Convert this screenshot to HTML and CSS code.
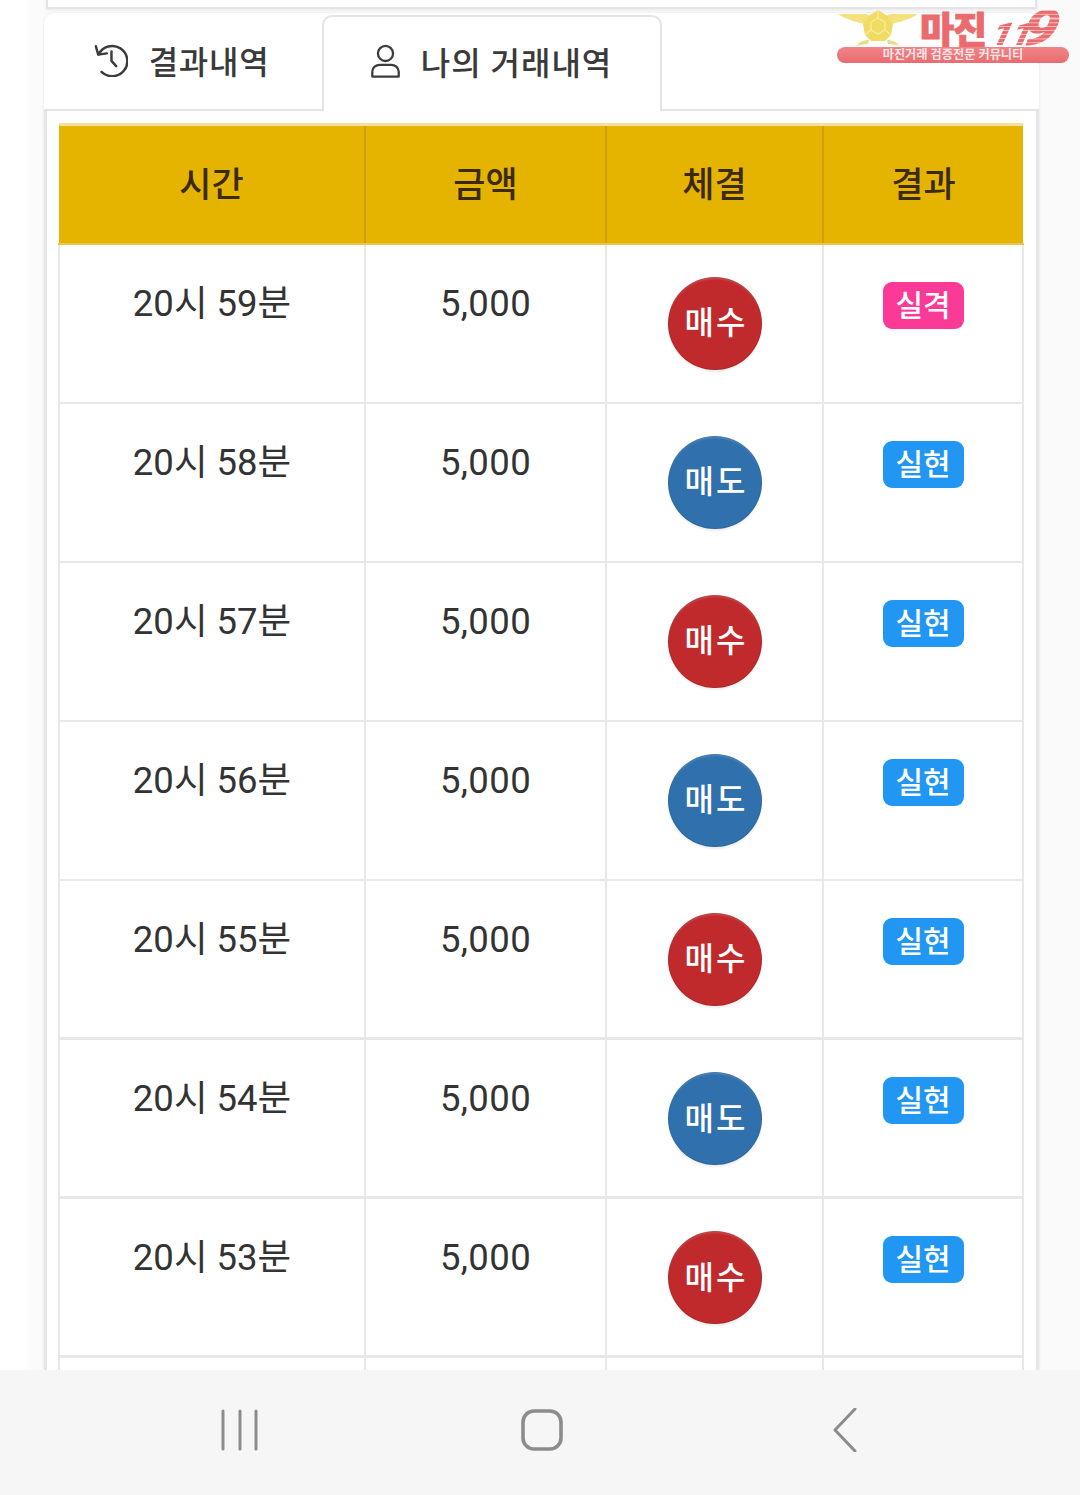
FILE: index.html
```html
<!DOCTYPE html>
<html lang="ko">
<head>
<meta charset="utf-8">
<title>나의 거래내역</title>
<link rel="stylesheet" href="styles.css">
</head>
<body>
<div class="screen">
  <main class="page">
    <div class="top-card"></div>
    <section class="panel">
      <div class="tabs">
        <div class="tab">
          <svg class="tab-icon" viewBox="0 0 36 36" fill="none" stroke="#3c3c3c" stroke-width="2.6" stroke-linecap="round" stroke-linejoin="round"><path d="M5 12A16 16 0 1 1 8 30.500"/><path d="M2 3.500l2.500 8.800 9-1.300"/><path d="M18.500 9v10l5 5.500"/></svg>
          <span>결과내역</span>
        </div>
        <div class="tab tab-active">
          <svg class="tab-icon tab-person" viewBox="0 0 32 36" fill="none" stroke="#3c3c3c" stroke-width="2.4" stroke-linejoin="round"><circle cx="16" cy="10" r="8"/><path d="M2 34.500v-5c0-5 4-7.500 8-7.500h12c4 0 8 2.500 8 7.500v5z"/></svg>
          <span>나의 거래내역</span>
        </div>
      </div>
      <div class="pane">
        <table class="trades">
          <colgroup><col class="c1"><col class="c2"><col class="c3"><col class="c4"></colgroup>
          <thead>
            <tr><th>시간</th><th>금액</th><th>체결</th><th>결과</th></tr>
          </thead>
          <tbody>
            <tr><td>20시 59분</td><td class="amount">5,000</td><td><span class="orb buy">매수</span></td><td><span class="badge lose">실격</span></td></tr>
            <tr><td>20시 58분</td><td class="amount">5,000</td><td><span class="orb sell">매도</span></td><td><span class="badge win">실현</span></td></tr>
            <tr><td>20시 57분</td><td class="amount">5,000</td><td><span class="orb buy">매수</span></td><td><span class="badge win">실현</span></td></tr>
            <tr><td>20시 56분</td><td class="amount">5,000</td><td><span class="orb sell">매도</span></td><td><span class="badge win">실현</span></td></tr>
            <tr class="heavy"><td>20시 55분</td><td class="amount">5,000</td><td><span class="orb buy">매수</span></td><td><span class="badge win">실현</span></td></tr>
            <tr class="heavy"><td>20시 54분</td><td class="amount">5,000</td><td><span class="orb sell">매도</span></td><td><span class="badge win">실현</span></td></tr>
            <tr class="heavy"><td>20시 53분</td><td class="amount">5,000</td><td><span class="orb buy">매수</span></td><td><span class="badge win">실현</span></td></tr>
            <tr><td></td><td></td><td></td><td></td></tr>
          </tbody>
        </table>
      </div>
    </section>
    <div class="logo">
      <svg class="logo-emblem" viewBox="0 0 80 37">
        <path fill="#f4e07c" d="M0 4h26c3 0 5 1 7 3v9c-5-1-9-3-14-4-3 0-3-1-6-2-4-1-9-3-13-6zM80 4H54c-3 0-5 1-7 3v9c5-1 9-3 14-4 3 0 3-1 6-2 4-1 9-3 13-6z"/>
        <path fill="#f0dc62" d="M40 0l8 5 7 9-2 11-6 6h-14l-6-6-2-11 7-9z"/>
        <path fill="none" stroke="#f9ee9e" stroke-width="1.2" d="M40 8l7 4v8l-7 4-7-4v-8zM40 0v8M33 20l-6 5M47 20l6 5"/>
        <path fill="#e4e08a" d="M18 36c3-4 8-6 13-6l-1 4c-4 0-8 1-12 2zM62 36c-3-4-8-6-13-6l1 4c4 0 8 1 12 2z"/>
      </svg>
      <div class="logo-word"><span class="logo-han">마진</span><span class="logo-one">11</span><span class="logo-nine">9</span></div>
      <div class="logo-bar">마진거래 검증전문 커뮤니티</div>
    </div>
  </main>
  <nav class="softkeys">
    <svg class="key" viewBox="0 0 44 44" fill="none" stroke="#8c8c8c" stroke-width="3" stroke-linecap="round"><path d="M5 3v38M22 3v38M38 3v38"/></svg>
    <svg class="key" viewBox="0 0 44 44" fill="none" stroke="#8c8c8c" stroke-width="3.6"><rect x="3" y="3" width="38" height="38" rx="11"/></svg>
    <svg class="key" viewBox="0 0 44 44" fill="none" stroke="#8c8c8c" stroke-width="3" stroke-linecap="round" stroke-linejoin="round"><path d="M33 1L13 22l20 21"/></svg>
  </nav>
</div>
</body>
</html>
```
FILE: styles.css
```css
* { box-sizing: border-box; }
html, body { margin: 0; padding: 0; }
body {
  width: 1080px;
  height: 1495px;
  overflow: hidden;
  font-family: Roboto, "Noto Sans CJK KR", sans-serif;
  color: #333;
  background: #fff;
}
.screen { display: flex; flex-direction: column; height: 1495px; }
.page {
  position: relative;
  flex: 1;
  min-height: 0;
  overflow: hidden;
  background: linear-gradient(90deg, #fff 0, #fff 22px, #fbfbfb 32px, #fafafa 100%);
  padding: 0 41px 0 44px;
}
.top-card {
  height: 9px;
  margin: 0 2px 4px;
  background: #fff;
  border: 2px solid #e4e4e4;
  border-top: 0;
  box-shadow: 0 1px 3px rgba(0,0,0,.08);
}
.panel {
  background: #fff;
  border-radius: 10px 10px 0 0;
  box-shadow: 0 0 3px rgba(0,0,0,.1);
}
.tabs { display: flex; height: 98px; position: relative; }
.tab {
  display: flex;
  align-items: center;
  justify-content: center;
  gap: 21px;
  width: 278px;
  height: 98px;
  font-size: 32px;
  font-weight: 500;
  letter-spacing: .7px;
  color: #3a3a3a;
  border-bottom: 2px solid #e4e4e4;
  padding: 0 3px 2px 0;
}
.tab-active {
  width: 340px;
  margin-top: 2px;
  margin-left: -.5px;
  height: 96px;
  gap: 20px;
  letter-spacing: 1px;
  border: 2px solid #e4e4e4;
  border-bottom: 0;
  border-radius: 10px 10px 0 0;
  background: #fff;
  padding: 0 1px 6px 0;
}
.tabs::after {
  content: "";
  flex: 1;
  border-bottom: 2px solid #e4e4e4;
}
.tab-icon { width: 34px; height: 34px; flex: none; }
.tab-person { width: 31px; }
.pane {
  padding: 12px 12px 0 11px;
  border-left: 3px solid #e6e6e6;
  border-right: 3px solid #e6e6e6;
}
.trades {
  width: 964px;
  table-layout: fixed;
  border-collapse: collapse;
}
.c1 { width: 306px; }
.c2 { width: 241px; }
.c3 { width: 217px; }
.c4 { width: 200px; }
.trades th {
  height: 119px;
  padding-bottom: 6px;
  background: #e5b400;
  color: #3c2a10;
  font-size: 35px;
  font-weight: 500;
  text-align: center;
  border-left: 2px solid #cf9f08;
  border-top: 3px solid #f2e0a0;
  border-bottom: 2px solid #e9c64a;
}
.trades th:first-child { border-left: 0; }
.trades td {
  height: 159px;
  padding: 34px 0 0;
  vertical-align: top;
  text-align: center;
  font-size: 36.5px;
  line-height: 50px;
  color: #333;
  border: 2px solid #e8e8e8;
}
.trades .amount { letter-spacing: .4px; }
.trades .heavy td { border-bottom-width: 3px; }
.orb {
  display: flex;
  align-items: center;
  justify-content: center;
  width: 94px;
  height: 93px;
  margin: -2px auto 0;
  padding: 0 0 0 3px;
  border-radius: 50%;
  font-size: 32px;
  font-weight: 500;
  letter-spacing: 2px;
  color: #fff;
  box-shadow: inset 0 0 0 1px rgba(0,0,0,.08), inset 0 3px 2px -1px rgba(255,255,255,.16), 0 2px 2px rgba(0,0,0,.07);
}
.buy { background: #c02a2c; }
.sell { background: #2f70ad; }
.badge {
  display: inline-flex;
  align-items: center;
  justify-content: center;
  width: 81px;
  height: 47px;
  margin-top: 3px;
  padding-top: 1px;
  border-radius: 9px;
  font-size: 30px;
  font-weight: 500;
  color: #fff;
  vertical-align: top;
}
.lose { background: #fb3996; }
.win { background: #2196f3; }
.logo {
  position: absolute;
  left: 837px;
  top: 10px;
  width: 232px;
  height: 53px;
}
.logo-emblem { position: absolute; left: 1px; top: 0; width: 80px; height: 37px; }
.logo-word {
  position: absolute;
  left: 83px;
  top: 0;
  height: 36px;
  display: flex;
  align-items: flex-end;
  white-space: nowrap;
  color: #ea6a6e;
}
.logo-han {
  font-size: 37px;
  font-weight: 900;
  line-height: 28px;
  letter-spacing: -1px;
  -webkit-text-stroke: 1px #ea6a6e;
}
.logo-one, .logo-nine {
  font-style: italic;
  font-weight: 900;
  color: transparent;
  background: repeating-linear-gradient(0deg, #ea6a6e 0, #ea6a6e 3px, #f7c0c0 3px, #f7c0c0 4px);
  -webkit-background-clip: text;
  background-clip: text;
}
.logo-one { font-size: 32px; line-height: 24px; margin-left: 9px; letter-spacing: -1px; transform: skewX(-14deg) scaleX(1.15); }
.logo-nine { font-size: 50px; line-height: 36px; margin-left: -2px; transform: skewX(-14deg) scaleX(1.25); }
.logo-bar {
  position: absolute;
  left: 0;
  bottom: 0;
  width: 232px;
  height: 16px;
  border-radius: 8px;
  background: linear-gradient(#f08488, #e96c70);
  color: #fbe6e6;
  font-size: 12.2px;
  font-weight: 700;
  line-height: 16px;
  text-align: center;
}
.softkeys {
  flex: none;
  height: 125px;
  background: #f6f6f6;
  display: flex;
  align-items: center;
  position: relative;
  padding: 0 214px 5px 218px;
  justify-content: space-between;
}
.key { width: 44px; height: 44px; }
```
